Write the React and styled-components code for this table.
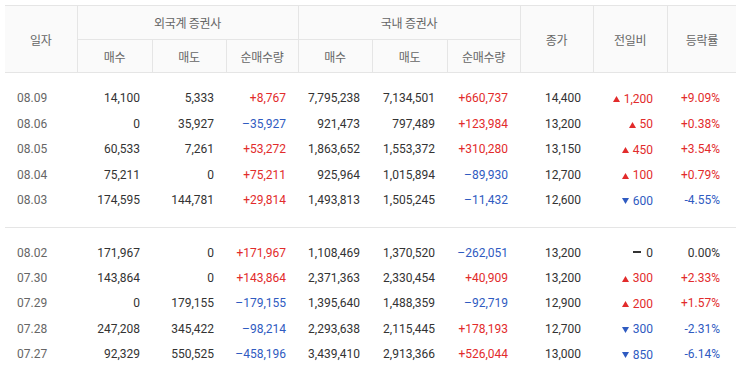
import React from 'react';
import styled, { createGlobalStyle } from 'styled-components';

const GlobalStyle = createGlobalStyle`
  body {
    margin: 0;
    background: #fff;
    font-family: Roboto, "Noto Sans CJK KR", sans-serif;
  }
`;

const Wrapper = styled.div`
  padding: 5px 0 0 5px;
`;

const Table = styled.table`
  width: 731px;
  table-layout: fixed;
  border-collapse: collapse;
  border-spacing: 0;
  font-size: 12px;
  color: #333;
`;

const HeadCell = styled.th`
  height: ${(p) => (p.$top ? 33 : 32)}px;
  padding: 0;
  border: 1px solid #e5e5e5;
  background: #fafafa;
  color: #666;
  font-weight: 400;
  font-size: 12px;
  letter-spacing: -0.3px;
  text-align: center;
  vertical-align: middle;
  &.first { border-left: none; }
  &.last { border-right: none; }
`;

const Group = styled.tbody`
  border-bottom: 1px solid #e5e5e5;
  tr:first-child td { padding-top: 13px; }
  tr:last-child td { padding-bottom: 13px; }
`;

const Cell = styled.td`
  line-height: 25px;
  height: 25px;
  padding: 0 ${(p) => p.$pr || 12}px 0 ${(p) => (p.$left ? 12 : 0)}px;
  text-align: ${(p) => (p.$left ? 'left' : 'right')};
  color: ${(p) => (p.$tone === 'up' ? '#e22b2b' : p.$tone === 'down' ? '#2f5bc1' : p.$left ? '#666' : '#333')};
  white-space: nowrap;
`;

const Change = styled.span`
  display: inline-flex;
  align-items: center;
  gap: 4px;
`;

const Flat = styled.span`
  display: inline-block;
  width: 8px;
  height: 2px;
  margin-right: 5px;
  background: #333;
  vertical-align: middle;
  position: relative;
  top: -1px;
`;

const Tri = ({ dir }) => (
  <svg width="7" height="6" viewBox="0 0 7 6">
    {dir === 'up' ? (
      <polygon points="3.5,0 7,6 0,6" fill="#e22b2b" />
    ) : (
      <polygon points="0,0 7,0 3.5,6" fill="#2f5bc1" />
    )}
  </svg>
);

const groups = [
  [
    ['08.09', '14,100', '5,333', '+8,767', '7,795,238', '7,134,501', '+660,737', '14,400', 'up', '1,200', '+9.09%'],
    ['08.06', '0', '35,927', '–35,927', '921,473', '797,489', '+123,984', '13,200', 'up', '50', '+0.38%'],
    ['08.05', '60,533', '7,261', '+53,272', '1,863,652', '1,553,372', '+310,280', '13,150', 'up', '450', '+3.54%'],
    ['08.04', '75,211', '0', '+75,211', '925,964', '1,015,894', '–89,930', '12,700', 'up', '100', '+0.79%'],
    ['08.03', '174,595', '144,781', '+29,814', '1,493,813', '1,505,245', '–11,432', '12,600', 'down', '600', '-4.55%'],
  ],
  [
    ['08.02', '171,967', '0', '+171,967', '1,108,469', '1,370,520', '–262,051', '13,200', 'flat', '0', '0.00%'],
    ['07.30', '143,864', '0', '+143,864', '2,371,363', '2,330,454', '+40,909', '13,200', 'up', '300', '+2.33%'],
    ['07.29', '0', '179,155', '–179,155', '1,395,640', '1,488,359', '–92,719', '12,900', 'up', '200', '+1.57%'],
    ['07.28', '247,208', '345,422', '–98,214', '2,293,638', '2,115,445', '+178,193', '12,700', 'down', '300', '-2.31%'],
    ['07.27', '92,329', '550,525', '–458,196', '3,439,410', '2,913,366', '+526,044', '13,000', 'down', '850', '-6.14%'],
  ],
];

const widths = [72, 75, 74, 72, 74, 75, 73, 73, 74, 69];

const toneOf = (v) => (v.startsWith('+') ? 'up' : v.startsWith('–') || v.startsWith('-') ? 'down' : undefined);

function DataRow({ row }) {
  const [date, fBuy, fSell, fNet, dBuy, dSell, dNet, close, dir, diff, rate] = row;
  return (
    <tr>
      <Cell $left>{date}</Cell>
      <Cell>{fBuy}</Cell>
      <Cell>{fSell}</Cell>
      <Cell $tone={toneOf(fNet)}>{fNet}</Cell>
      <Cell>{dBuy}</Cell>
      <Cell>{dSell}</Cell>
      <Cell $tone={toneOf(dNet)}>{dNet}</Cell>
      <Cell>{close}</Cell>
      <Cell $pr={14} $tone={dir === 'flat' ? undefined : dir}>
        {dir === 'flat' ? (
          <><Flat />{diff}</>
        ) : (
          <Change><Tri dir={dir} />{diff}</Change>
        )}
      </Cell>
      <Cell $pr={16} $tone={toneOf(rate)}>{rate}</Cell>
    </tr>
  );
}

export default function App() {
  return (
    <Wrapper>
      <GlobalStyle />
      <Table>
        <colgroup>
          {widths.map((w, i) => <col key={i} style={{ width: w }} />)}
        </colgroup>
        <thead>
          <tr>
            <HeadCell $top rowSpan={2} className="first">일자</HeadCell>
            <HeadCell $top colSpan={3}>외국계 증권사</HeadCell>
            <HeadCell $top colSpan={3}>국내 증권사</HeadCell>
            <HeadCell $top rowSpan={2}>종가</HeadCell>
            <HeadCell $top rowSpan={2}>전일비</HeadCell>
            <HeadCell $top rowSpan={2} className="last">등락률</HeadCell>
          </tr>
          <tr>
            <HeadCell>매수</HeadCell>
            <HeadCell>매도</HeadCell>
            <HeadCell>순매수량</HeadCell>
            <HeadCell>매수</HeadCell>
            <HeadCell>매도</HeadCell>
            <HeadCell>순매수량</HeadCell>
          </tr>
        </thead>
        {groups.map((g, gi) => (
          <Group key={gi}>
            {g.map((row) => <DataRow key={row[0]} row={row} />)}
          </Group>
        ))}
      </Table>
    </Wrapper>
  );
}
